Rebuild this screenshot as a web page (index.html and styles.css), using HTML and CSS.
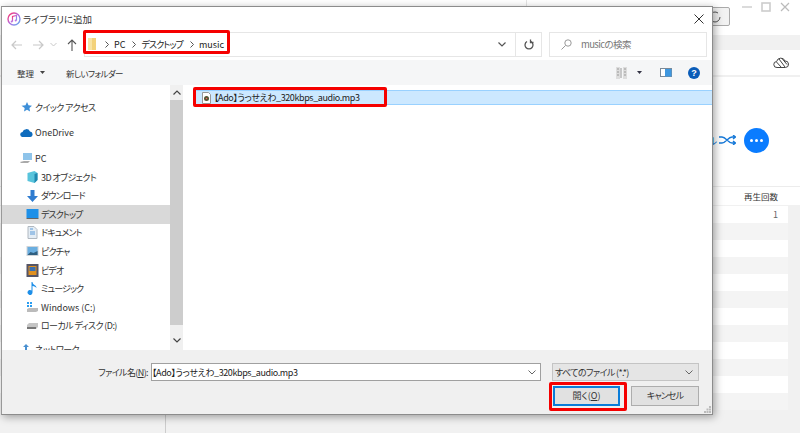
FILE: index.html
```html
<!DOCTYPE html>
<html lang="ja">
<head>
<meta charset="utf-8">
<title>ライブラリに追加</title>
<link rel="stylesheet" href="styles.css">
</head>
<body>
<div class="app">
  <div class="app-top">
    <div class="app-sync"><svg width="18" height="18" viewBox="0 0 18 18"><path d="M14 9a5 5 0 1 1-2-4" fill="none" stroke="#555" stroke-width="1"/></svg></div>
    <div class="app-winbtns">
      <svg width="12" height="12" viewBox="0 0 12 12"><path d="M1 6h10" stroke="#ccc" stroke-width="1.4"/></svg>
      <svg width="12" height="12" viewBox="0 0 12 12"><rect x="2" y="2" width="8" height="8" fill="none" stroke="#ccc" stroke-width="1.6"/></svg>
      <svg width="12" height="12" viewBox="0 0 12 12"><path d="M2 2l8 8M10 2l-8 8" stroke="#bbb" stroke-width="1.2"/></svg>
    </div>
  </div>
  <div class="app-band"></div>
  <div class="app-tools">
    <svg width="16" height="12" viewBox="0 0 16 12"><path d="M4 10.5a3 3 0 0 1-.4-6A4.4 4.4 0 0 1 12 4a3.2 3.2 0 0 1 .5 6.5zM6 2l6 8M3.5 5l5 5.500M9 1.500l5 6" fill="none" stroke="#444" stroke-width="1"/></svg>
  </div>
  <div class="app-actions">
    <span class="shuffle-text">ル</span>
    <svg width="17" height="10" viewBox="0 0 17 10"><path d="M0 2h3c4 0 6 6 10 6h3M0 8h3c4 0 6-6 10-6h3M14 0l2.500 2L14 4M14 6l2.500 2L14 10" fill="none" stroke="#1578d8" stroke-width="1.300"/></svg>
    <div class="more-btn"><i></i><i></i><i></i></div>
  </div>
  <div class="app-head"><span>再生回数</span></div>
  <div class="app-rows">
    <div class="row"><span>1</span></div><div class="row alt"></div><div class="row"></div><div class="row alt"></div><div class="row"></div><div class="row alt"></div><div class="row"></div><div class="row alt"></div><div class="row"></div><div class="row alt"></div><div class="row"></div><div class="row alt"></div>
  </div>
  <div class="app-divider"></div>
  <div class="app-divider-top"></div>
</div>

<div class="dialog">
  <div class="titlebar">
    <svg class="itunes" width="14" height="14" viewBox="0 0 14 14"><defs><linearGradient id="it" x1="0" y1="0" x2="1" y2="1"><stop offset="0" stop-color="#f36"/><stop offset="0.5" stop-color="#b66be0"/><stop offset="1" stop-color="#5ab0f0"/></linearGradient></defs><circle cx="7" cy="7" r="6" fill="#fff" stroke="url(#it)" stroke-width="1.4"/><path d="M5.500 9.500V4.500l4-1v5" fill="none" stroke="url(#it)" stroke-width="1.200"/><circle cx="4.700" cy="9.500" r="1" fill="#c070e0"/><circle cx="8.700" cy="8.500" r="1" fill="#c070e0"/></svg>
    <span class="title">ライブラリに追加</span>
    <svg class="close" width="10" height="10" viewBox="0 0 10 10"><path d="M.5.500l9 9M9.500.500l-9 9" stroke="#333" stroke-width="1"/></svg>
  </div>
  <div class="navbar">
    <div class="nav-btns">
      <svg width="14" height="12" viewBox="0 0 14 12"><path d="M12 6H2M6 2L2 6l4 4" fill="none" stroke="#c8c8c8" stroke-width="1.200"/></svg>
      <svg width="14" height="12" viewBox="0 0 14 12"><path d="M2 6h10M8 2l4 4-4 4" fill="none" stroke="#c8c8c8" stroke-width="1.200"/></svg>
      <svg class="nav-down" width="7" height="5" viewBox="0 0 7 5"><path d="M.5 1l3 3 3-3" fill="none" stroke="#c8c8c8"/></svg>
      <svg class="nav-up" width="12" height="14" viewBox="0 0 12 14"><path d="M6 13V2M2 6l4-4 4 4" fill="none" stroke="#555" stroke-width="1.100"/></svg>
    </div>
    <div class="address">
      <svg class="folder" width="8" height="14" viewBox="0 0 8 14"><path d="M0 1h8v12H0z" fill="#f3d27a"/><path d="M0 1h4v12H0z" fill="#f8e3a4"/></svg>
      <svg class="crumb-sep" width="4" height="7" viewBox="0 0 4 7"><path d="M.5.500l3 3-3 3" fill="none" stroke="#555"/></svg><span>PC</span><svg class="crumb-sep" width="4" height="7" viewBox="0 0 4 7"><path d="M.5.500l3 3-3 3" fill="none" stroke="#555"/></svg><span class="kana">デスクトップ</span><svg class="crumb-sep" width="4" height="7" viewBox="0 0 4 7"><path d="M.5.500l3 3-3 3" fill="none" stroke="#555"/></svg><span>music</span>
      <svg class="addr-chev" width="8" height="5" viewBox="0 0 8 5"><path d="M.5.500L4 4 7.500.500" fill="none" stroke="#555" stroke-width="1.200"/></svg>
      <div class="addr-refresh"><svg width="10" height="11" viewBox="0 0 10 11"><path d="M3 2.500a4 4 0 1 0 4 0M6.500 .5v3h3" fill="none" stroke="#555" stroke-width="1.300"/></svg></div>
    </div>
    <div class="search">
      <svg width="11" height="11" viewBox="0 0 11 11"><circle cx="7" cy="4" r="3.200" fill="none" stroke="#999"/><path d="M4.500 6.500L.5 10.500" stroke="#999"/></svg>
      <span class="tight">musicの検索</span>
    </div>
  </div>
  <div class="toolbar">
    <span class="tool-org">整理</span><svg class="caret" width="5" height="3" viewBox="0 0 5 3"><path d="M0 0h5L2.500 3z" fill="#444"/></svg>
    <span class="tool-new tight">新しいフォルダー</span>
    <svg class="view-ic" width="12" height="12" viewBox="0 0 12 12"><path d="M0 0h4v12H0zM7 0h4v12H7z" fill="#ddd"/><path d="M1 2h2M1 5h2M1 8h2M8 2h2M8 5h2M8 8h2M5 1v10" stroke="#999"/></svg>
    <svg class="caret view-caret" width="5" height="3" viewBox="0 0 5 3"><path d="M0 0h5L2.500 3z" fill="#334"/></svg>
    <svg class="pane-ic" width="12" height="9" viewBox="0 0 12 9"><rect x=".5" y=".5" width="11" height="8" fill="#fff" stroke="#7a8a99"/><rect x="5" y="1" width="6.500" height="7.500" fill="#3f97df"/></svg>
    <div class="help">?</div>
  </div>
  <div class="body">
    <div class="tree">
      <div class="tree-items">
        <div class="tree-item lv0 gap-a"><svg width="12" height="12" viewBox="0 0 12 12"><path d="M6.500 1l1.500 3.300 3.500.4-2.600 2.400.7 3.500-3.100-1.800L3.500 10.600l.7-3.500L1 4.700l4-.4z" fill="#3d8fd8"/></svg><span class="tight">クイック アクセス</span></div>
        <div class="tree-item lv0 gap-b"><svg width="13" height="8" viewBox="0 0 13 8"><path d="M3 8a2.500 2.500 0 0 1-.5-5A4 4 0 0 1 10 2.500 2.800 2.800 0 0 1 10.500 8z" fill="#0f6cbd"/></svg><span>OneDrive</span></div>
        <div class="tree-item lv0 gap-b"><svg width="13" height="12" viewBox="0 0 13 12"><rect x="3" y="1" width="9" height="7" fill="#8fc4ea"/><path d="M0 10l4-1h6l-2 2H1z" fill="#aaa"/></svg><span>PC</span></div>
        <div class="tree-item lv1"><svg width="12" height="12" viewBox="0 0 12 12"><path d="M1 2l7-2 3 2v7l-3 3-7-2z" fill="#58c4dc"/><path d="M8 3v9l3-3V2z" fill="#1f88b0"/></svg><span class="tight">3D オブジェクト</span></div>
        <div class="tree-item lv1"><svg width="12" height="12" viewBox="0 0 12 12"><path d="M4 0h4v6h3.500L6 12 .5 6H4z" fill="#2f7cd0"/></svg><span class="kana">ダウンロード</span></div>
        <div class="tree-item lv1 current"><svg width="12" height="10" viewBox="0 0 12 10"><rect width="12" height="9" fill="#1e90e8"/><rect y="9" width="12" height="1" fill="#666"/></svg><span class="kana">デスクトップ</span></div>
        <div class="tree-item lv1"><svg width="11" height="13" viewBox="0 0 11 13"><path d="M1 .5h6l3 3v9H1z" fill="#e4edf5" stroke="#b0b8c0"/><path d="M3 3h3M3 6h5M3 8h5" stroke="#5a9ad8"/></svg><span class="kana">ドキュメント</span></div>
        <div class="tree-item lv1"><svg width="12" height="10" viewBox="0 0 12 10"><rect width="12" height="10" fill="#d0d4d8"/><rect x="1" y="1" width="10" height="8" fill="#6aaee0"/><path d="M1 9l3-3 3 1 4-2v4z" fill="#2f5f80"/></svg><span class="kana">ピクチャ</span></div>
        <div class="tree-item lv1"><svg width="12" height="13" viewBox="0 0 12 13"><rect width="12" height="13" fill="#556"/><rect x="2" y="2" width="8" height="9" fill="#e09020"/><rect x="3" y="3" width="6" height="4" fill="#3a70b0"/></svg><span class="kana">ビデオ</span></div>
        <div class="tree-item lv1"><svg width="10" height="13" viewBox="0 0 10 13"><path d="M4 0l1 0c0 3 4 3 4 6-1-1-2-2-4-2v6.500A2.500 2.500 0 1 1 4 8.500z" fill="#1e8fe8"/></svg><span class="kana">ミュージック</span></div>
        <div class="tree-item lv1"><svg width="13" height="12" viewBox="0 0 13 12"><path d="M1 1h2v2H1zM4 1h2v2H4zM1 4h2v2H1zM4 4h2v2H4z" fill="#2a9df0"/><path d="M1 8l2-1h9v3l-2 1H1z" fill="#bbb"/></svg><span>Windows (C:)</span></div>
        <div class="tree-item lv1"><svg width="13" height="7" viewBox="0 0 13 7"><path d="M1 3l2-2h9v4l-2 2H1z" fill="#c5c5c5"/><path d="M1 5h9v2H1z" fill="#777"/></svg><span class="tight">ローカル ディスク (D:)</span></div>
        <div class="tree-item lv0 gap-c"><svg width="13" height="11" viewBox="0 0 13 11"><path d="M6 0l3 3H7v3H5V3H3zM1 7h4v4H1zM8 7h4v4H8z" fill="#4a90d0"/></svg><span class="tight">ネットワーク</span></div>
      </div>
      <div class="scroll">
        <svg width="8" height="5" viewBox="0 0 8 5"><path d="M.5 4.500L4 1l3.500 3.500" fill="none" stroke="#444" stroke-width="1.200"/></svg>
        <div class="thumb"></div>
        <svg width="8" height="5" viewBox="0 0 8 5"><path d="M.5.500L4 4 7.500.500" fill="none" stroke="#444" stroke-width="1.200"/></svg>
      </div>
    </div>
    <div class="files">
      <div class="file-row">
        <svg width="9" height="12" viewBox="0 0 9 12"><path d="M.5.500h6l2 2v9h-8z" fill="#fff" stroke="#999"/><circle cx="4.500" cy="6.500" r="2.500" fill="#553"/><circle cx="4.500" cy="6.500" r=".8" fill="#e66"/></svg>
        <span>【Ado】うっせえわ_320kbps_audio.mp3</span>
      </div>
    </div>
  </div>
  <div class="footer">
    <div class="name-line">
      <span class="name-label"><span class="tight">ファイル名(<u>N</u>):</span></span>
      <div class="name-input"><span>【Ado】うっせえわ_320kbps_audio.mp3</span><svg width="8" height="5" viewBox="0 0 8 5"><path d="M.5.500L4 4 7.500.500" fill="none" stroke="#666"/></svg></div>
      <div class="type-select"><span class="tight">すべてのファイル (*.*)</span><svg width="8" height="5" viewBox="0 0 8 5"><path d="M.5.500L4 4 7.500.500" fill="none" stroke="#666"/></svg></div>
    </div>
    <div class="btn-line">
      <div class="btn primary">開く(<u>O</u>)</div>
      <div class="btn"><span class="kana">キャンセル</span></div>
    </div>
    <svg class="grip" width="7" height="7" viewBox="0 0 7 7"><path d="M5 0h2v2H5zM2.500 2.500h2v2h-2zM5 2.500h2v2H5zM0 5h2v2H0zM2.500 5h2v2h-2zM5 5h2v2H5z" fill="#bbb"/></svg>
  </div>
</div>

<div class="mark mark-addr"></div>
<div class="mark mark-file"></div>
<div class="mark mark-open"></div>
</body>
</html>
```
FILE: styles.css
```css
* { box-sizing: border-box; }
html, body { margin: 0; padding: 0; }
body {
  width: 800px; height: 433px; overflow: hidden; position: relative;
  background: #fff; color: #222;
  font-family: "Noto Sans CJK JP", "Noto Sans", sans-serif; font-size: 9px;
  font-feature-settings: "palt";
}
svg { display: block; flex: none; }
.tight { letter-spacing: -.6px; }
.kana { letter-spacing: -.9px; }

/* background application */
.app { height: 433px; display: flex; flex-direction: column; position: relative; }
.app-top { height: 35px; display: flex; justify-content: flex-end; padding: 0 9px 0 0; }
.app-sync { width: 30px; height: 19px; margin: 7px 11px 0 0; border: 1px solid #aaa; border-radius: 2px; background: #f2f2f2; display: flex; justify-content: center; }
.app-winbtns { display: flex; gap: 7px; margin-top: 1px; height: 12px; }
.app-band { height: 15px; background: #f1f1f1; }
.app-tools { height: 27px; border-bottom: 2px solid #f0f0f0; display: flex; justify-content: flex-end; align-items: center; padding-right: 11px; }
.app-actions { height: 110px; display: flex; justify-content: flex-end; align-items: center; gap: 2px; padding: 16px 31px 0 0; }
.shuffle-text { color: #1578d8; font-size: 10px; }
.more-btn { width: 25px; height: 25px; border-radius: 50%; background: #0a7cff; display: flex; justify-content: center; align-items: center; gap: 2px; margin-left: 6px; }
.more-btn i { width: 3px; height: 3px; background: #fff; border-radius: 50%; }
.app-head { height: 18px; border-top: 1px solid #ececec; margin-top: -1px; display: flex; justify-content: flex-end; align-items: center; padding-right: 22px; font-size: 8.5px; color: #333; }
.app-rows { background: #f1f1f1; padding: 1px 12px 0 0; margin-top: 1px; flex: 1; }
.row { height: 17px; background: #fff; display: flex; justify-content: flex-end; align-items: center; padding-right: 10px; font-size: 9px; color: #666; }
.row.alt { background: #f4f4f4; }
.app-divider { position: absolute; left: 165px; top: 415px; bottom: 0; width: 1px; background: #ccc; }
.app-divider-top { position: absolute; left: 526px; top: 0; height: 6px; width: 1px; background: #e4e4e4; }

/* dialog window */
.dialog {
  position: absolute; left: 1px; top: 6px; width: 712px; height: 409px;
  background: #fff; border: 1px solid #8c8c8c; border-left-color: #999;
  box-shadow: 2px 2px 8px rgba(0,0,0,.35);
  display: flex; flex-direction: column;
}
.titlebar { height: 25px; flex: none; display: flex; align-items: center; padding: 0 7px 2px 5px; gap: 2px; }
.title { font-size: 9.5px; color: #333; }
.close { margin-left: auto; margin-right: 1px; }
.navbar { height: 28px; flex: none; display: flex; padding: 0 5px 3px 8px; }
.nav-btns { width: 74px; display: flex; align-items: center; gap: 7px; }
.nav-down { margin-left: -2px; }
.nav-up { margin-left: 2px; }
.address { width: 458px; height: 25px; border: 1px solid #e6e6e6; display: flex; align-items: center; padding: 0 0 1px 3px; font-size: 9px; color: #222; }
.folder { margin-right: 2px; }
.crumb-sep { margin: 0 5px 0 7px; }
.addr-chev { margin-left: auto; margin-right: 9px; }
.addr-refresh { width: 26px; height: 23px; border-left: 1px solid #e6e6e6; display: flex; justify-content: center; align-items: center; }
.search { width: 158px; height: 25px; margin-left: 7px; border: 1px solid #e6e6e6; display: flex; align-items: center; gap: 9px; padding: 0 0 1px 11px; color: #777; font-size: 9.5px; }
.toolbar { height: 25px; flex: none; background: #f5f6f7; display: flex; align-items: center; padding: 0 12px 0 15px; color: #333; font-size: 8.5px; }
.caret { margin-left: 6px; }
.tool-new { margin-left: 21px; }
.view-ic { margin-left: auto; }
.view-caret { margin-left: 9px; }
.pane-ic { margin-left: 18px; }
.help { width: 12px; height: 12px; margin-left: 16px; border-radius: 50%; background: #0a5cb8; color: #fff; font: bold 9px/12px "Liberation Sans", sans-serif; text-align: center; }
.body { flex: 1; min-height: 0; display: flex; overflow: hidden; }
.tree { width: 181px; flex: none; display: flex; }
.tree-items { width: 168px; flex: none; padding-top: 13px; overflow: hidden; font-size: 9px; color: #333; }
.tree-item { height: 18.600px; display: flex; align-items: center; gap: 2px; white-space: nowrap; }
.tree-item svg { width: 13px; }
.lv0 { padding-left: 18px; }
.lv1 { padding-left: 24px; gap: 2px; }
.gap-b { margin-top: 7px; }
.gap-c { margin-top: 5px; }
.current { background: #d9d9d9; }
.scroll { width: 13px; flex: none; background: #f0f0f0; display: flex; flex-direction: column; align-items: center; padding-top: 5px; gap: 5px; }
.thumb { width: 13px; height: 225px; background: #cdcdcd; }
.scroll svg:last-child { margin-top: 8px; }
.files { flex: 1; padding: 5px 0 0 12px; }
.file-row { height: 15px; background: #cce8ff; border-top: 1px solid #99d1ff; border-bottom: 1px solid #99d1ff; display: flex; align-items: center; gap: 3px; padding-left: 7px; font-size: 9px; letter-spacing: -.4px; color: #222; }
.footer { height: 64px; flex: none; background: #f0f0f0; position: relative; padding: 13px 13px 0 0; }
.name-line { display: flex; align-items: center; height: 18px; font-size: 9px; color: #333; }
.name-label { width: 149px; text-align: right; padding-right: 3px; }
.name-input { width: 390px; height: 18px; background: #fff; border: 1px solid #a0a0a0; display: flex; align-items: center; justify-content: space-between; padding-right: 4px; font-size: 9px; letter-spacing: -.4px; color: #222; }
.type-select { width: 147px; height: 18px; margin-left: 11px; background: #e5e5e5; border: 1px solid #c4c4c4; display: flex; align-items: center; justify-content: space-between; padding: 0 5px 0 2px; }
.btn-line { display: flex; justify-content: flex-end; gap: 11px; margin-top: 5px; }
.btn { width: 68px; height: 20px; background: #e1e1e1; border: 1px solid #adadad; text-align: center; line-height: 18px; font-size: 9px; color: #333; }
.btn.primary { width: 67px; border: 2px solid #0a7cd8; line-height: 16px; }
.grip { position: absolute; right: 1px; bottom: 1px; }

/* red annotations */
.mark { position: absolute; border: 3px solid #f50000; border-radius: 2px; }
.mark-addr { left: 83px; top: 30px; width: 147px; height: 24px; }
.mark-file { left: 193px; top: 87px; width: 194px; height: 20px; }
.mark-open { left: 549px; top: 382px; width: 78px; height: 29px; }
```
